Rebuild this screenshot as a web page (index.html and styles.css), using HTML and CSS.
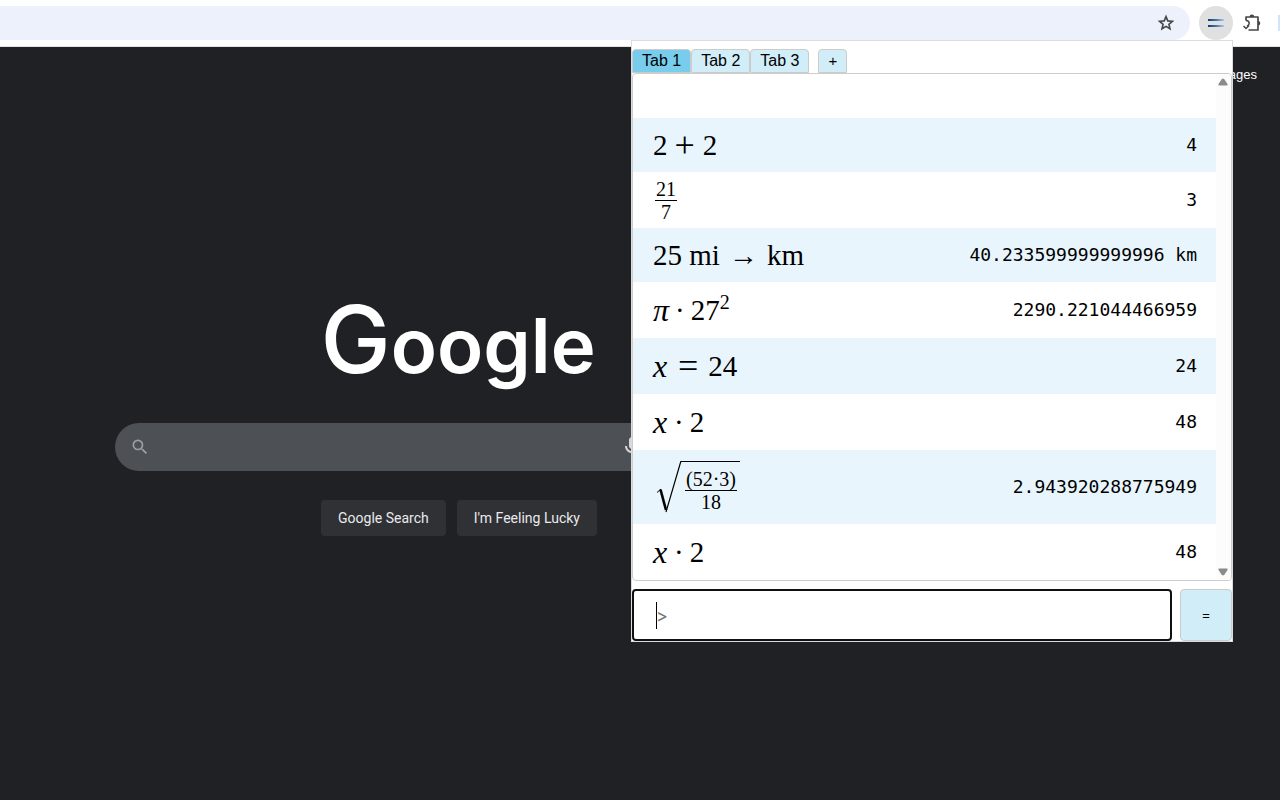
FILE: index.html
```html
<!DOCTYPE html>
<html lang="en">
<head>
<meta charset="utf-8">
<title>Calculator</title>
<link rel="stylesheet" href="styles.css">
</head>
<body>
<header class="toolbar">
  <div class="omnibox">
    <button class="icon-btn" type="button" aria-label="Bookmark">
      <svg width="18" height="18" viewBox="0 0 18 18" fill="none" stroke="#444746" stroke-width="1.6"><path d="M9 2.600l1.800 4.300 4.600.4-3.500 3 1.100 4.500L9 12.400l-4 2.400 1.100-4.500-3.500-3 4.600-.4z"/></svg>
    </button>
  </div>
  <button class="icon-btn ext-active" type="button" aria-label="Calculator">
    <svg width="16" height="10" viewBox="0 0 16 10">
      <defs><linearGradient id="bar"><stop offset="0" stop-color="#123d6b"/><stop offset=".5" stop-color="#3f75a8"/><stop offset="1" stop-color="#a9cdea"/></linearGradient></defs>
      <rect y="1" width="16" height="2" fill="url(#bar)"/><rect y="7" width="16" height="2" fill="url(#bar)"/>
    </svg>
  </button>
  <button class="icon-btn" type="button" aria-label="Extensions">
    <svg width="20" height="20" viewBox="0 0 20 20"><path d="M4 7.500V4h12v13H6.500" fill="none" stroke="#444746" stroke-width="1.700" stroke-linejoin="round"/><path d="M7.500 4a2.400 2.400 0 0 1 4.800 0zM16 8a2.300 2.300 0 0 1 0 4.600z" fill="#444746"/><path d="M4 7.500q3.200.3 3.200 2.600T5 13M1.500 13l2.500 2.500 3-3" fill="none" stroke="#444746" stroke-width="1.500"/></svg>
  </button>
  <span class="profile-edge"></span>
</header>

<main class="page">
  <nav class="top-links"><a href="#">Images</a></nav>
  <form class="search">
    <h1 class="logo">Google</h1>
    <div class="search-bar">
      <svg width="20" height="20" viewBox="0 0 24 24" fill="#9aa0a6"><path d="M15.500 14h-.79l-.28-.27A6.471 6.471 0 0 0 16 9.500 6.500 6.500 0 1 0 9.500 16c1.610 0 3.090-.59 4.230-1.570l.27.28v.79l5 4.990L20.490 19l-4.990-5zm-6 0C7.010 14 5 11.990 5 9.500S7.010 5 9.500 5 14 7.010 14 9.500 11.990 14 9.500 14z"/></svg>
      <input class="search-input" type="text" aria-label="Search">
      <svg width="24" height="24" viewBox="0 0 24 24" fill="#d5d6d8"><path d="M12 14c1.660 0 3-1.340 3-3V5c0-1.660-1.340-3-3-3S9 3.340 9 5v6c0 1.660 1.340 3 3 3zm5-3c0 2.760-2.240 5-5 5s-5-2.240-5-5H5c0 3.530 2.610 6.430 6 6.920V21h2v-3.080c3.390-.49 6-3.390 6-6.920h-2z"/></svg>
    </div>
    <div class="search-actions">
      <button type="button">Google Search</button>
      <button type="button">I'm Feeling Lucky</button>
    </div>
  </form>
</main>

<section class="popup" aria-label="Calculator">
  <div class="tabs">
    <button class="tab selected" type="button">Tab 1</button>
    <button class="tab" type="button">Tab 2</button>
    <button class="tab" type="button">Tab 3</button>
    <button class="tab add" type="button">+</button>
  </div>
  <div class="log">
    <div class="rows">
      <div class="row short"><span class="math">2<span class="sign">+</span>2</span><output>4</output></div>
      <div class="row"><span class="math"><span class="frac"><span>21</span><span>7</span></span></span><output>3</output></div>
      <div class="row short"><span class="math">25 mi<span class="arrow">→</span>km</span><output>40.233599999999996 km</output></div>
      <div class="row"><span class="math"><i>π</i><span class="dot">·</span>27<sup>2</sup></span><output>2290.221044466959</output></div>
      <div class="row"><span class="math"><i>x</i><span class="sign equal">=</span>24</span><output>24</output></div>
      <div class="row"><span class="math"><i>x</i><span class="dot">·</span>2</span><output>48</output></div>
      <div class="row tall"><span class="math"><span class="root"><svg width="26" height="54" viewBox="0 0 26 54" fill="none" stroke="#000"><path d="M1 31.500L5 28" stroke-width="1"/><path d="M4.500 28.500L10 49" stroke-width="2.600"/><path d="M10 51L24.800.5H26" stroke-width="1.200"/></svg><span class="radicand"><span class="frac"><span>(52·3)</span><span>18</span></span></span></span></span><output>2.943920288775949</output></div>
      <div class="row"><span class="math"><i>x</i><span class="dot">·</span>2</span><output>48</output></div>
    </div>
    <div class="scrollbar">
      <svg width="10" height="8" viewBox="0 0 10 8"><path d="M4 .8h2L9.500 6v1.500h-9V6z" fill="#8b8b8b"/></svg>
      <svg width="10" height="8" viewBox="0 0 10 8"><path d="M4 7.200h2L9.500 2V.5h-9V2z" fill="#8b8b8b"/></svg>
    </div>
  </div>
  <form class="entry">
    <div class="field"><input type="text" placeholder="&gt;" aria-label="Expression"><span class="caret"></span></div>
    <button class="equals" type="button">=</button>
  </form>
</section>
</body>
</html>
```
FILE: styles.css
```css
* { box-sizing: border-box; }
body {
  margin: 0;
  min-height: 100vh;
  display: flex;
  flex-direction: column;
  position: relative;
  background: #202124;
  font-family: "Liberation Sans", Arial, sans-serif;
}
button, input { font: inherit; margin: 0; }

.toolbar {
  display: flex;
  align-items: center;
  height: 47px;
  background: #fff;
  border-bottom: 1px solid #e3e4e6;
}
.omnibox {
  flex: 1;
  height: 34px;
  display: flex;
  align-items: center;
  justify-content: flex-end;
  padding-right: 7px;
  margin-right: 9px;
  background: #ecf1fb;
  border-radius: 0 17px 17px 0;
}
.icon-btn {
  width: 34px;
  height: 34px;
  padding: 0;
  border: 0;
  border-radius: 50%;
  background: none;
  display: grid;
  place-items: center;
}
.ext-active { background: #e0e0e0; margin-right: 2px; }
.profile-edge { width: 2px; height: 16px; margin-left: 9px; background: #d3e3fd; }

.page { flex: 1; }
.top-links {
  display: flex;
  justify-content: flex-end;
  padding: 20px 23px 0;
  font-size: 13px;
  line-height: 16px;
}
.top-links a { color: #fff; text-decoration: none; }
.search {
  display: flex;
  flex-direction: column;
  align-items: center;
  width: 686px;
  margin: 200px 0 0 115px;
}
.logo {
  margin: 0;
  font: 600 76px/112px Inter, sans-serif;
  color: #fff;
}
.logo::first-letter { font-size: 94px; font-weight: 500; line-height: 112px; }
.search-bar {
  width: 100%;
  height: 48px;
  margin: 22px 0 29px;
  padding: 0 157px 0 15px;
  display: flex;
  align-items: center;
  gap: 12px;
  background: #4d5054;
  border-radius: 24px;
}
.search-input {
  flex: 1;
  min-width: 0;
  border: 0;
  outline: 0;
  background: none;
  color: #fff;
  font-size: 16px;
}
.search-actions { display: flex; gap: 11px; padding-left: 2px; }
.search-actions button {
  height: 36px;
  padding: 0 17px;
  border: 0;
  border-radius: 4px;
  background: #303134;
  color: #e8eaed;
  font: 14px Roboto, sans-serif;
}

.popup {
  position: absolute;
  top: 40px;
  right: 47px;
  width: 602px;
  padding-top: 8px;
  background: #fff;
  border: 1px solid #dcdcdc;
}
.tabs { display: flex; }
.tab {
  height: 24px;
  padding: 0 9px;
  border: 1px solid #ccc;
  border-radius: 4px 4px 0 0;
  background: #d1edf8;
  color: #000;
  font-size: 16px;
  line-height: 22px;
}
.tab.selected { background: #79cdec; }
.tab.add { margin-left: 9px; font-size: 15px; }

.log {
  display: flex;
  border: 1px solid #ccc;
  border-radius: 4px;
  overflow: hidden;
}
.rows { flex: 1; padding-top: 44px; }
.row {
  min-height: 56px;
  padding: 0 19px 0 20px;
  display: flex;
  align-items: center;
  justify-content: space-between;
}
.row.short { min-height: 54px; }
.row.tall { min-height: 74px; }
.row:nth-child(odd) { background: #e8f5fc; }
.row output { font: 18px/24px "DejaVu Sans Mono", monospace; }
.math {
  display: flex;
  align-items: center;
  white-space: pre;
  font: 29px/32px "Liberation Serif", serif;
}
.math i { font-size: 32px; min-width: 15px; }
.math sup { align-self: flex-start; font-size: 20px; line-height: 16px; }
.sign { font-size: 36px; padding: 0 8px 0 7px; }
.sign.equal { padding: 0 10px; }
.arrow { padding: 0 9px; }
.dot { padding: 0 6px; }
.frac {
  display: flex;
  flex-direction: column;
  align-items: center;
  margin: 0 2px;
  font-size: 20px;
  line-height: 22px;
}
.frac span:first-child { padding: 0 1px; border-bottom: 1px solid #000; }
.root { display: flex; padding: 2px 0 0 3px; }
.radicand {
  display: flex;
  align-items: flex-start;
  padding: 6px 1px 0;
  border-top: 1px solid #000;
}

.scrollbar {
  width: 15px;
  padding: 4px 1px 4px 0;
  display: flex;
  flex-direction: column;
  align-items: center;
  justify-content: space-between;
  background: #fcfcfc;
}

.entry { display: flex; gap: 8px; padding: 8px 0 0; }
.field { flex: 1; position: relative; }
.field input {
  width: 100%;
  height: 52px;
  padding: 0 22px;
  border: 2px solid #101010;
  border-radius: 4px;
  outline: 0;
  background: #fff;
  font: 18px "DejaVu Sans Mono", monospace;
}
.field input::placeholder { color: #757575; font-family: Inter, sans-serif; }
.caret {
  position: absolute;
  left: 24px;
  top: 13px;
  width: 1px;
  height: 27px;
  background: #000;
}
.equals {
  width: 52px;
  height: 52px;
  padding: 0;
  border: 1px solid #ccc;
  border-radius: 4px;
  background: #d1edf8;
  color: #000;
  font-size: 13px;
}
```
